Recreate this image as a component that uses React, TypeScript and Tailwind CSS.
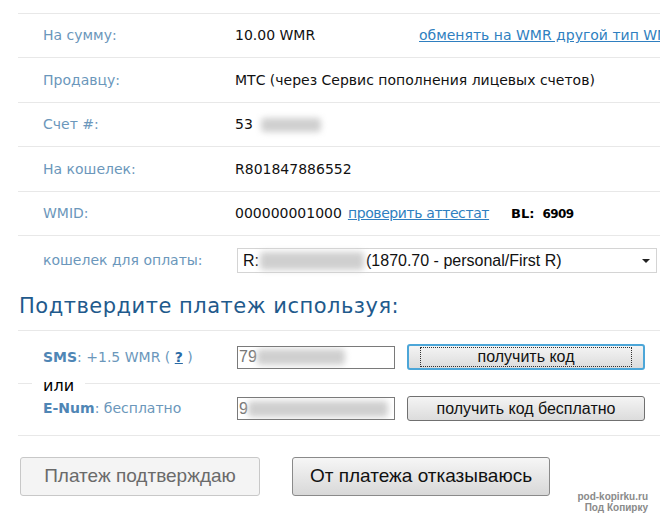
function Blur({ w, h = 16 }: { w: number; h?: number }) {
  return (
    <span
      className="inline-block bg-[#cfcfcf] blur-[3px] rounded-sm align-middle"
      style={{ width: w, height: h }}
    />
  );
}

function Row({ label, h, children }: { label: string; h: string; children: React.ReactNode }) {
  return (
    <div className={`flex items-center border-t border-[#e8e8e8] ${h}`}>
      <div className="w-[217px] pl-[25px] text-[#6b97bb]">{label}</div>
      <div className="flex items-center text-[#111]">{children}</div>
    </div>
  );
}

export default function App() {
  return (
    <div className="relative w-[660px] h-[525px] overflow-hidden bg-white font-['DejaVu_Sans',Verdana,sans-serif] text-[14px]">
      <div className="ml-[18px] w-[720px] pt-[13px]">
        <div className="flex items-center border-t border-[#e8e8e8] h-[44px]">
          <div className="w-[217px] pl-[25px] text-[#6b97bb]">На сумму:</div>
          <div className="w-[184px] text-[#111]">10.00 WMR</div>
          <a className="text-[#2f7fc0] underline whitespace-nowrap">обменять на WMR другой тип WM</a>
        </div>
        <Row label="Продавцу:" h="h-[45px]">МТС (через Сервис пополнения лицевых счетов)</Row>
        <Row label="Счет #:" h="h-[44px]">
          <span>53</span>
          <span className="ml-[8px]"><Blur w={60} h={14} /></span>
        </Row>
        <Row label="На кошелек:" h="h-[45px]">R801847886552</Row>
        <Row label="WMID:" h="h-[44px]">
          <span>000000001000</span>
          <a className="ml-[6px] text-[#2f7fc0] underline tracking-[-0.4px]">проверить аттестат</a>
          <span className="ml-[22px] font-bold text-[13px] text-black">BL:</span>
          <span className="ml-[8px] font-black text-[12px] tracking-[-0.6px] text-black">6909</span>
        </Row>
        <div className="flex items-center border-t border-[#e8e8e8] h-[50px]">
          <div className="w-[219px] pl-[25px] text-[#6b97bb]">кошелек для оплаты:</div>
          <div className="relative flex items-center w-[420px] h-[25px] border border-[#d4d4d4] bg-white pl-[5px] font-['Liberation_Sans',Arial,sans-serif] text-[16px] text-[#111]">
            <span>R:</span>
            <span className="ml-[1px] mr-[2px]"><Blur w={104} h={18} /></span>
            <span>(1870.70 - personal/First R)</span>
            <span className="absolute right-[6px] top-[10px] w-0 h-0 border-l-[4px] border-r-[4px] border-t-[4px] border-l-transparent border-r-transparent border-t-[#222]" />
          </div>
        </div>

        <div className="h-[46px] border-b border-[#e8e8e8] pt-[9px] pl-[1px] text-[21px] leading-[25px] tracking-[0.5px] text-[#1f5a8c]">
          Подтвердите платеж используя:
        </div>

        <div className="flex items-center h-[52px]">
          <div className="w-[219px] pl-[25px] text-[#6b97bb]">
            <b className="text-[#4f86b5]">SMS</b>: +1.5 WMR ( <b className="text-[#2a6aa5] underline">?</b> )
          </div>
          <div className="flex items-center w-[158px] h-[23px] border border-[#7a7a7a] pl-[1px] font-['Liberation_Sans',Arial,sans-serif] text-[16px] text-[#777] overflow-hidden">
            <span>79</span>
            <Blur w={88} h={16} />
          </div>
          <button className="ml-[12px] w-[238px] h-[26px] rounded-[3px] border-2 border-[#4ca6d8] bg-gradient-to-b from-[#f4f4f4] to-[#dcdcdc] p-[1px] font-['Liberation_Sans',Arial,sans-serif] text-[16px] text-[#111]">
            <span className="flex items-center justify-center w-full h-full border border-dotted border-[#333] ml-[10px] max-w-[212px]">получить код</span>
          </button>
        </div>

        <div className="flex flex-col h-[53px] border-t border-b border-[#e8e8e8]">
          <span className="self-start -mt-[7px] ml-[14px] px-[11px] bg-white text-[16px] leading-[18px] text-black">или</span>
          <div className="flex items-center h-[27px]">
            <div className="w-[219px] pl-[25px] text-[#6b97bb]">
              <b className="text-[#4f86b5]">E-Num</b>: бесплатно
            </div>
            <div className="flex items-center w-[158px] h-[23px] border border-[#7a7a7a] pl-[1px] font-['Liberation_Sans',Arial,sans-serif] text-[16px] text-[#777] overflow-hidden">
              <span>9</span>
              <Blur w={140} h={16} />
            </div>
            <button className="ml-[12px] w-[238px] h-[25px] rounded-[3px] border border-[#707070] bg-gradient-to-b from-[#f4f4f4] to-[#dcdcdc] font-['Liberation_Sans',Arial,sans-serif] text-[16px] text-[#111]">
              получить код бесплатно
            </button>
          </div>
        </div>
      </div>

      <div className="flex gap-[32px] ml-[20px] mt-[21px] font-['Liberation_Sans',Arial,sans-serif] text-[19px]">
        <button className="w-[240px] h-[39px] rounded-[3px] border border-[#c8c8c8] bg-[#f4f4f4] text-[#6a6a6a]">
          Платеж подтверждаю
        </button>
        <button className="w-[258px] h-[39px] rounded-[3px] border border-[#8a8a8a] bg-gradient-to-b from-[#f6f6f6] to-[#d8d8d8] text-[#111]">
          От платежа отказываюсь
        </button>
      </div>

      <div className="absolute right-[12px] top-[491px] text-right font-['Liberation_Sans',Arial,sans-serif] font-bold text-[10px] leading-[11px] text-[#8a8a8a]">
        <div>pod-kopirku.ru</div>
        <div>Под Копирку</div>
      </div>
    </div>
  );
}
